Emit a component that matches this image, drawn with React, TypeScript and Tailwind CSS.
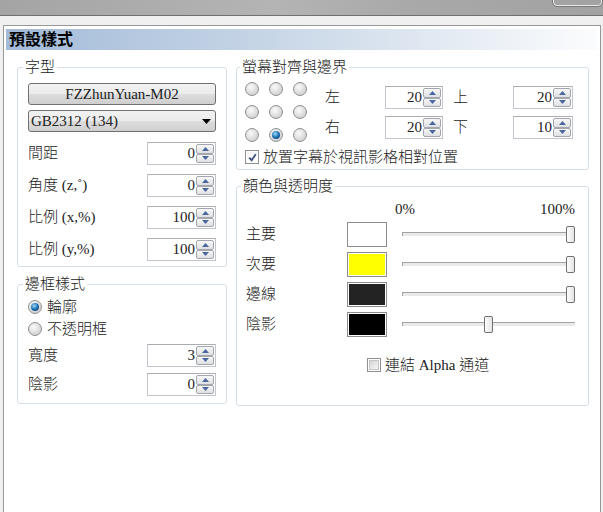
import React from 'react';
import clsx from 'clsx';

const Arrow = ({ up }: { up?: boolean }) => (
  <svg width="7" height="4" viewBox="0 0 7 4">
    <polygon points={up ? '3.5,0 7,4 0,4' : '0,0 7,0 3.5,4'} fill="#4a67a0" />
  </svg>
);

const SpinBox = ({ value, className }: { value: string; className?: string }) => (
  <div className={clsx('flex h-[23px] border border-[#c2c6cc] border-t-[#abadb3] bg-white', className)}>
    <div className="flex flex-1 items-center justify-end pr-[1px] leading-none">{value}</div>
    <div className="flex w-[19px] flex-col py-[1px] pr-[1px]">
      <div className="flex flex-1 items-center justify-center rounded-[2px] border border-[#a3a7ad] bg-[linear-gradient(#f7f7f7,#dfe0e2)]">
        <Arrow up />
      </div>
      <div className="flex flex-1 items-center justify-center rounded-[2px] border border-[#a3a7ad] bg-[linear-gradient(#f7f7f7,#dfe0e2)]">
        <Arrow />
      </div>
    </div>
  </div>
);

const Radio = ({ checked }: { checked?: boolean }) => (
  <span className="flex h-[14px] w-[14px] shrink-0 items-center justify-center rounded-full border border-[#8e8f8f] bg-[radial-gradient(circle_at_40%_35%,#fafafa,#dadada_60%,#c2c2c2)]">
    {checked && (
      <span className="h-[8px] w-[8px] rounded-full bg-[radial-gradient(circle_at_40%_35%,#9fdcff,#1a6fb0_50%,#0b2f58)]" />
    )}
  </span>
);

const CheckBox = ({ checked }: { checked?: boolean }) => (
  <span className="flex h-[14px] w-[14px] shrink-0 items-center justify-center border border-[#8e8f8f] bg-white p-[1px]">
    <span
      className={clsx(
        'flex h-full w-full items-center justify-center',
        checked ? 'bg-[linear-gradient(#f2f2f2,#ffffff)]' : 'border border-[#c4c4c4] bg-[linear-gradient(135deg,#d5d5d5,#f7f7f7)]'
      )}
    >
      {checked && (
        <svg width="9" height="9" viewBox="0 0 9 9">
          <path d="M1.2 4.6 L3.6 7.2 L7.8 1.2" fill="none" stroke="#3d4f7e" strokeWidth="1.8" />
        </svg>
      )}
    </span>
  </span>
);

const Slider = ({ value }: { value: number }) => (
  <div className="relative h-[17px] w-[173px]">
    <div className="absolute left-0 right-0 top-[6px] h-[4px] border-l border-t border-[#a2a2a2] bg-[#e8eaea]" />
    <div
      className="absolute top-0 h-[17px] w-[9px] rounded-[2px] border border-[#707070] bg-[linear-gradient(90deg,#fdfdfd,#e4e4e4)]"
      style={{ left: `${(value / 100) * 164}px` }}
    />
  </div>
);

const Group = ({ title, className, children }: { title: string; className?: string; children: React.ReactNode }) => (
  <fieldset className={clsx('rounded-[3px] border border-[#d5dfe5]', className)}>
    <legend className="ml-[-5px] px-[2px] leading-[17px]">{title}</legend>
    {children}
  </fieldset>
);

const fontRows = [
  { label: '間距', value: '0' },
  { label: '角度 (z,˚)', value: '0' },
  { label: '比例 (x,%)', value: '100' },
  { label: '比例 (y,%)', value: '100' },
];

const colorRows = [
  { label: '主要', swatch: 'bg-white', value: 100 },
  { label: '次要', swatch: 'bg-[#ffff00] border-[1px] border-white', value: 100 },
  { label: '邊線', swatch: 'bg-[#232323] border-[1px] border-white', value: 100 },
  { label: '陰影', swatch: 'bg-black border-[1px] border-white', value: 50 },
];

export default function App() {
  return (
    <div className="flex h-[512px] w-[603px] flex-col overflow-hidden bg-[#f0f0f0] font-['Liberation_Serif','Noto_Sans_CJK_TC',serif] text-[15px] font-light text-[#222222]">
      {/* 視窗標題列 */}
      <div className="flex h-[16px] justify-end border-b border-[#707070] bg-[linear-gradient(90deg,#a4a4a4,#b4b4b4_45%,#a8a8a8_70%,#a2a2a2)]">
        <div className="mr-[1px] h-[6px] w-[49px] rounded-b-[4px] border border-t-0 border-[#e8e8e8] outline outline-[#7a7a7a]" />
      </div>
      <div className="h-[9px]" />

      <div className="ml-[3px] mr-[2px] flex flex-1 flex-col border border-b-0 border-[#979797] bg-white">
        <div className="ml-[2px] mr-[3px] mt-[3px] flex h-[21px] items-center bg-[linear-gradient(90deg,#a3bbd8,#c3d3e5_40%,#e4ebf3_75%,#fbfcfd)] pl-[3px] text-[16px] font-bold text-black">
          預設樣式
        </div>

        <div className="mt-[9px] flex gap-[9px] pl-[13px]">
          {/* 左欄 */}
          <div className="flex w-[210px] flex-col gap-[9px]">
            <Group title="字型" className="px-[10px] pb-[5px]">
              <div className="mt-[7px] flex h-[22px] items-center justify-center rounded-[3px] border border-[#707070] bg-[linear-gradient(#f2f2f2,#ebebeb_50%,#dddddd_50%,#cfcfcf)]">
                FZZhunYuan-M02
              </div>
              <div className="mt-[5px] flex h-[22px] items-center justify-between rounded-[3px] border border-[#707070] bg-[linear-gradient(#f2f2f2,#ebebeb_50%,#dddddd_50%,#cfcfcf)] pl-[2px] pr-[4px]">
                <span>GB2312 (134)</span>
                <svg width="9" height="5" viewBox="0 0 9 5">
                  <polygon points="0,0 9,0 4.5,5" fill="#000" />
                </svg>
              </div>
              <div className="mt-[10px] flex flex-col gap-[9px]">
                {fontRows.map((r) => (
                  <div key={r.label} className="flex items-center justify-between">
                    <span>{r.label}</span>
                    <SpinBox value={r.value} className="w-[69px]" />
                  </div>
                ))}
              </div>
            </Group>

            <Group title="邊框樣式" className="px-[10px] pb-[7px]">
              <div className="mt-[3px] flex h-[22px] items-center gap-[5px]">
                <Radio checked />
                <span>輪廓</span>
              </div>
              <div className="flex h-[22px] items-center gap-[5px]">
                <Radio />
                <span>不透明框</span>
              </div>
              <div className="mt-[4px] flex flex-col gap-[6px]">
                <div className="flex items-center justify-between">
                  <span>寬度</span>
                  <SpinBox value="3" className="w-[69px]" />
                </div>
                <div className="flex items-center justify-between">
                  <span>陰影</span>
                  <SpinBox value="0" className="w-[69px]" />
                </div>
              </div>
            </Group>
          </div>

          {/* 右欄 */}
          <div className="flex w-[353px] flex-col gap-[8px]">
            <Group title="螢幕對齊與邊界" className="pb-[3px] pl-[8px] pr-[10px]">
              <div className="mt-[6px] flex items-start">
                <div className="grid grid-cols-3 gap-x-[10px] gap-y-[9px]">
                  {Array.from({ length: 9 }).map((_, i) => (
                    <Radio key={i} checked={i === 7} />
                  ))}
                </div>
                <div className="ml-[18px] grid grid-cols-[60px_58px_70px_60px] items-center gap-y-[7px] pt-[4px]">
                  <span>左</span>
                  <SpinBox value="20" />
                  <span className="pl-[10px]">上</span>
                  <SpinBox value="20" />
                  <span>右</span>
                  <SpinBox value="20" />
                  <span className="pl-[10px]">下</span>
                  <SpinBox value="10" />
                </div>
              </div>
              <div className="mt-[6px] flex h-[18px] items-center gap-[4px]">
                <CheckBox checked />
                <span>放置字幕於視訊影格相對位置</span>
              </div>
            </Group>

            <Group title="顏色與透明度" className="pb-[31px] pl-[9px] pr-[13px]">
              <div className="mt-[6px] flex h-[17px] items-center justify-between pl-[149px] leading-none">
                <span>0%</span>
                <span>100%</span>
              </div>
              <div className="mt-[4px] flex flex-col gap-[5px]">
                {colorRows.map((r) => (
                  <div key={r.label} className="flex h-[25px] items-center">
                    <span className="w-[101px]">{r.label}</span>
                    <div className="h-[25px] w-[40px] border border-[#8c8c8c]">
                      <div className={clsx('h-full w-full', r.swatch)} />
                    </div>
                    <div className="ml-[15px]">
                      <Slider value={r.value} />
                    </div>
                  </div>
                ))}
              </div>
              <div className="mt-[19px] flex h-[18px] items-center gap-[4px] pl-[121px]">
                <CheckBox />
                <span>連結 Alpha 通道</span>
              </div>
            </Group>
          </div>
        </div>
      </div>
    </div>
  );
}
